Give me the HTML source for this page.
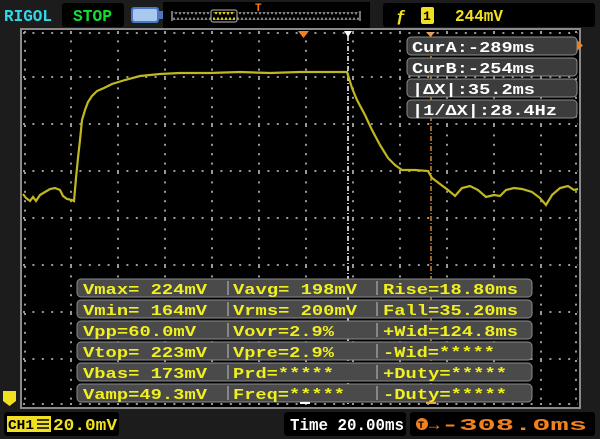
<!DOCTYPE html>
<html><head><meta charset="utf-8"><style>
html,body{margin:0;padding:0;background:#1c1c1c;width:600px;height:439px;overflow:hidden}
svg{display:block}
text{font-family:"Liberation Mono","DejaVu Sans Mono",monospace;font-weight:bold}
</style></head><body>
<svg width="600" height="439" viewBox="0 0 600 439" xmlns="http://www.w3.org/2000/svg">
<defs>
<pattern id="zz" x="0" y="0" width="8" height="8" patternUnits="userSpaceOnUse">
<polyline points="0,6 2,2 4,6 6,2 8,6" fill="none" stroke="#9a9a9a" stroke-width="1"/>
</pattern>
<pattern id="zy" x="0" y="0" width="8" height="8" patternUnits="userSpaceOnUse">
<polyline points="0,6 2,2 4,6 6,2 8,6" fill="none" stroke="#f0e020" stroke-width="1.2"/>
</pattern>
<pattern id="vd" x="0" y="31" width="2" height="9.4" patternUnits="userSpaceOnUse">
<rect x="0" y="0" width="2" height="2" fill="#9a9a9a"/>
</pattern>
<pattern id="hd" x="23" y="0" width="9.4" height="2" patternUnits="userSpaceOnUse">
<rect x="0" y="0" width="2" height="2" fill="#9a9a9a"/>
</pattern>
</defs>
<rect width="600" height="439" fill="#1c1c1c"/>
<text x="4" y="21" fill="#30d8e8" font-size="17" textLength="48" lengthAdjust="spacingAndGlyphs">RIGOL</text>
<rect x="62" y="3" width="62" height="24" rx="3" fill="#000"/>
<text x="73" y="21" fill="#10e030" font-size="17" textLength="39" lengthAdjust="spacingAndGlyphs">STOP</text>
<rect x="131" y="7" width="28" height="16" rx="3" fill="#4a78c0"/>
<rect x="133" y="9" width="24" height="12" rx="2" fill="#a8c8f0"/>
<rect x="159" y="11" width="4" height="8" fill="#4a78c0"/>
<rect x="163" y="2" width="207" height="26" fill="#000"/>
<rect x="173" y="12" width="186" height="8" fill="url(#zz)"/>
<path d="M172,11v10M360,11v10" stroke="#9a9a9a" stroke-width="1.5"/>
<rect x="211" y="10" width="26" height="12" rx="2" fill="#000" stroke="#bbb" stroke-width="1"/>
<rect x="213" y="12" width="22" height="8" fill="url(#zy)"/>
<text x="255" y="11" fill="#f08020" font-size="11">T</text>
<rect x="383" y="3" width="212" height="24" rx="3" fill="#000"/>
<text x="396" y="21" fill="#f0e020" font-size="17">ƒ</text>
<rect x="421" y="7" width="13" height="17" rx="2" fill="#f0e020"/>
<text x="423" y="20" fill="#000" font-size="13">1</text>
<text x="455" y="21" fill="#f0e020" font-size="17" textLength="48" lengthAdjust="spacingAndGlyphs">244mV</text>
<rect x="21" y="29" width="559" height="379" fill="#000" stroke="#8a8a8a" stroke-width="2"/>
<g fill="url(#vd)">
<rect x="70" y="31" width="2" height="375"/><rect x="117" y="31" width="2" height="375"/><rect x="164" y="31" width="2" height="375"/><rect x="211" y="31" width="2" height="375"/><rect x="258" y="31" width="2" height="375"/><rect x="305" y="31" width="2" height="375"/><rect x="352" y="31" width="2" height="375"/><rect x="399" y="31" width="2" height="375"/><rect x="446" y="31" width="2" height="375"/><rect x="493" y="31" width="2" height="375"/><rect x="540" y="31" width="2" height="375"/>
<rect x="24" y="31" width="2" height="375"/><rect x="575" y="31" width="2" height="375"/>
</g>
<g fill="url(#hd)">
<rect x="23" y="76" width="555" height="2"/><rect x="23" y="123" width="555" height="2"/><rect x="23" y="170" width="555" height="2"/><rect x="23" y="217" width="555" height="2"/><rect x="23" y="264" width="555" height="2"/><rect x="23" y="311" width="555" height="2"/><rect x="23" y="358" width="555" height="2"/>
<rect x="23" y="32" width="555" height="2"/><rect x="23" y="403" width="555" height="2"/>
</g>
<path d="M348,36v370" stroke="#fff" stroke-width="1.5" stroke-dasharray="5 2 1 2"/>
<path d="M344,31h8l-4,6z" fill="#fff"/>
<path d="M431,36v370" stroke="#f0a040" stroke-width="1.3" stroke-dasharray="5 2 1 2"/>
<path d="M426,32h9l-4.5,5z" fill="#e0a060"/>
<path d="M298,31h11l-5.5,7z" fill="#f08020"/>
<path d="M577,40v11l6,-5.5z" fill="#f08020"/>
<polyline fill="none" stroke="#c0b820" stroke-width="2.2" points="23,194 26,198 30,201 33,197 36,201 40,195 45,192 50,189 55,188 60,190 63,196 67,199 72,200 74,201 76,178 78,158 80,140 82,120 85,110 88,102 92,96 97,91 104,88 112,84 125,80 140,76 160,74 180,73 210,73 240,72 270,73 300,72 330,72 347,72 352,88 357,100 365,115 372,130 380,145 388,158 395,165 402,170 415,170 428,171 432,178 440,184 448,190 455,196 462,188 470,186 478,190 486,197 494,195 500,196 506,190 514,188 522,189 532,192 540,198 546,205 552,195 560,188 568,186 574,190 578,189"/>
<g font-size="15" fill="#fff">
<rect x="407" y="37" width="170" height="18" rx="4" fill="#3c3c3c" stroke="#8a8a8a"/>
<text x="412" y="52" textLength="123" lengthAdjust="spacingAndGlyphs">CurA:-289ms</text>
<rect x="407" y="58" width="170" height="18" rx="4" fill="#3c3c3c" stroke="#8a8a8a"/>
<text x="412" y="73" textLength="123" lengthAdjust="spacingAndGlyphs">CurB:-254ms</text>
<rect x="407" y="79" width="170" height="18" rx="4" fill="#3c3c3c" stroke="#8a8a8a"/>
<text x="412" y="94" textLength="123" lengthAdjust="spacingAndGlyphs">|ΔX|:35.2ms</text>
<rect x="407" y="100" width="170" height="18" rx="4" fill="#3c3c3c" stroke="#8a8a8a"/>
<text x="412" y="115" textLength="145" lengthAdjust="spacingAndGlyphs">|1/ΔX|:28.4Hz</text>
</g>
<g font-size="15" fill="#f0f020">
<g fill="#4a4a4a" stroke="#8a8a8a">
<rect x="77" y="279" width="455" height="18" rx="4"/>
<rect x="77" y="300" width="455" height="18" rx="4"/>
<rect x="77" y="321" width="455" height="18" rx="4"/>
<rect x="77" y="342" width="455" height="18" rx="4"/>
<rect x="77" y="363" width="455" height="18" rx="4"/>
<rect x="77" y="384" width="455" height="18" rx="4"/>
</g>
<path d="M228,281v14M228,302v14M228,323v14M228,344v14M228,365v14M228,386v14M377,281v14M377,302v14M377,323v14M377,344v14M377,365v14M377,386v14" stroke="#999" stroke-width="1.5"/>
<text x="83" y="294" textLength="124" lengthAdjust="spacingAndGlyphs">Vmax= 224mV</text><text x="233" y="294" textLength="124" lengthAdjust="spacingAndGlyphs">Vavg= 198mV</text><text x="383" y="294" textLength="135" lengthAdjust="spacingAndGlyphs">Rise=18.80ms</text>
<text x="83" y="315" textLength="124" lengthAdjust="spacingAndGlyphs">Vmin= 164mV</text><text x="233" y="315" textLength="124" lengthAdjust="spacingAndGlyphs">Vrms= 200mV</text><text x="383" y="315" textLength="135" lengthAdjust="spacingAndGlyphs">Fall=35.20ms</text>
<text x="83" y="336" textLength="113" lengthAdjust="spacingAndGlyphs">Vpp=60.0mV</text><text x="233" y="336" textLength="101" lengthAdjust="spacingAndGlyphs">Vovr=2.9%</text><text x="383" y="336" textLength="135" lengthAdjust="spacingAndGlyphs">+Wid=124.8ms</text>
<text x="83" y="357" textLength="124" lengthAdjust="spacingAndGlyphs">Vtop= 223mV</text><text x="233" y="357" textLength="101" lengthAdjust="spacingAndGlyphs">Vpre=2.9%</text><text x="383" y="357" textLength="112" lengthAdjust="spacingAndGlyphs">-Wid=*****</text>
<text x="83" y="378" textLength="124" lengthAdjust="spacingAndGlyphs">Vbas= 173mV</text><text x="233" y="378" textLength="101" lengthAdjust="spacingAndGlyphs">Prd=*****</text><text x="383" y="378" textLength="124" lengthAdjust="spacingAndGlyphs">+Duty=*****</text>
<text x="83" y="399" textLength="124" lengthAdjust="spacingAndGlyphs">Vamp=49.3mV</text><text x="233" y="399" textLength="112" lengthAdjust="spacingAndGlyphs">Freq=*****</text><text x="383" y="399" textLength="124" lengthAdjust="spacingAndGlyphs">-Duty=*****</text>
</g>
<path d="M300,403h10" stroke="#fff" stroke-width="2"/>
<path d="M426,403h10" stroke="#f0a040" stroke-width="2"/>
<path d="M3,391h13v10l-6.5,5l-6.5,-5z" fill="#f0e020"/>
<rect x="4" y="412" width="115" height="24" rx="3" fill="#000"/>
<rect x="7" y="416" width="44" height="16" fill="#f0e020"/>
<text x="8" y="429" fill="#000" font-size="14" textLength="26" lengthAdjust="spacingAndGlyphs">CH1</text>
<path d="M37,420h12M37,424h12M37,428h12" stroke="#000" stroke-width="1.5"/>
<text x="53" y="430" fill="#f0e020" font-size="17" textLength="64" lengthAdjust="spacingAndGlyphs">20.0mV</text>
<rect x="284" y="412" width="122" height="24" rx="3" fill="#000"/>
<text x="290" y="430" fill="#fff" font-size="17" textLength="114" lengthAdjust="spacingAndGlyphs">Time 20.00ms</text>
<rect x="410" y="412" width="185" height="24" rx="3" fill="#000"/>
<circle cx="422" cy="424" r="6" fill="#f08020"/>
<text x="418" y="428" fill="#000" font-size="10">T</text>
<text x="429" y="430" fill="#f08020" font-size="17">→</text>
<text x="441" y="430" fill="#f08020" font-size="17" textLength="146" lengthAdjust="spacingAndGlyphs">-308.0ms</text>
</svg>
</body></html>
